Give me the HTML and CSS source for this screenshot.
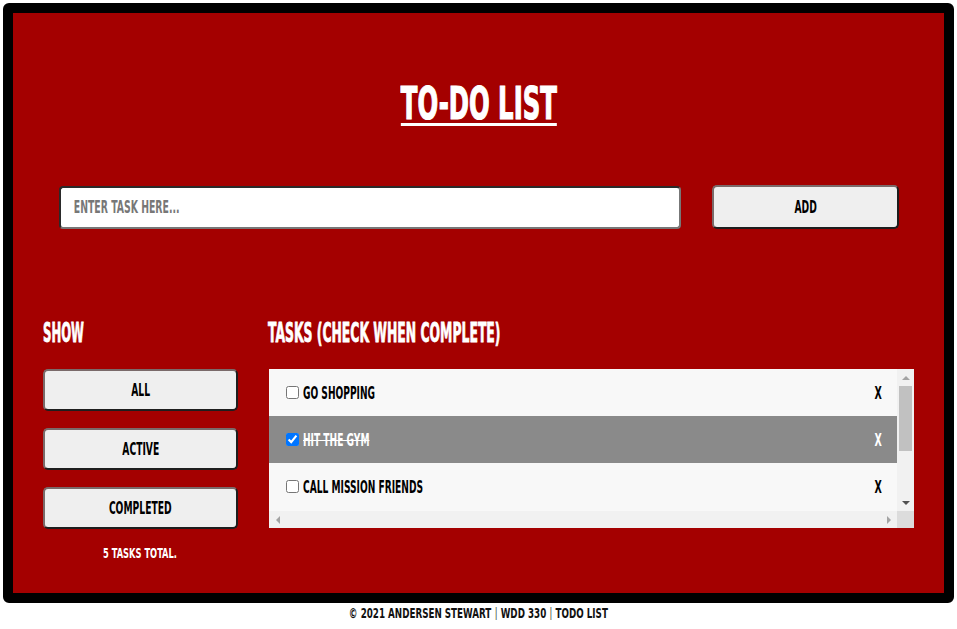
FILE: index.html
```html
<!DOCTYPE html>
<html lang="en">
<head>
<meta charset="utf-8">
<title>To-Do List</title>
<link rel="stylesheet" href="styles.css">
</head>
<body>
<div class="app">
  <h1 class="title"><span class="n">TO-DO LIST</span></h1>
  <form class="entry">
    <div class="fieldbox"><input class="field" type="text" placeholder="ENTER TASK HERE..."></div>
    <button class="btn add" type="button"><span class="n">ADD</span></button>
  </form>
  <div class="main">
    <aside class="side">
      <h2 class="head"><span class="n">SHOW</span></h2>
      <button class="btn filter" type="button"><span class="n">ALL</span></button>
      <button class="btn filter" type="button"><span class="n">ACTIVE</span></button>
      <button class="btn filter" type="button"><span class="n">COMPLETED</span></button>
      <p class="count"><span class="n">5 TASKS TOTAL.</span></p>
    </aside>
    <section class="tasks">
      <h2 class="head head-wide"><span class="n">TASKS (CHECK WHEN COMPLETE)</span></h2>
      <div class="listbox">
        <ul class="list">
          <li class="row"><input class="check" type="checkbox"><span class="label"><span class="n">GO SHOPPING</span></span><span class="del"><span class="n">X</span></span></li>
          <li class="row done"><input class="check" type="checkbox" checked><span class="label"><span class="n">HIT THE GYM</span></span><span class="del"><span class="n">X</span></span></li>
          <li class="row"><input class="check" type="checkbox"><span class="label"><span class="n">CALL MISSION FRIENDS</span></span><span class="del"><span class="n">X</span></span></li>
          <li class="row"><input class="check" type="checkbox"><span class="label"><span class="n">FINISH PROJECT</span></span><span class="del"><span class="n">X</span></span></li>
          <li class="row"><input class="check" type="checkbox"><span class="label"><span class="n">READ A BOOK</span></span><span class="del"><span class="n">X</span></span></li>
        </ul>
        <div class="vbar">
          <div class="sb-btn up"></div>
          <div class="thumb"></div>
          <div class="track"></div>
          <div class="sb-btn down"></div>
        </div>
        <div class="hbar">
          <div class="sb-btn left"></div>
          <div class="sb-btn right"></div>
        </div>
        <div class="corner"></div>
      </div>
    </section>
  </div>
</div>
<footer class="foot"><span class="n">© 2021 ANDERSEN STEWART <span class="sep">|</span> WDD 330 <span class="sep">|</span> TODO LIST</span></footer>
</body>
</html>
```
FILE: styles.css
```css
* { box-sizing: border-box; }

body {
  margin: 3px;
  background: #ffffff;
  font-family: "DejaVu Sans Condensed", "DejaVu Sans", sans-serif;
  font-weight: 700;
}

.n {
  display: inline-block;
  white-space: nowrap;
}

.app {
  height: 600px;
  border: 10px solid #000;
  border-radius: 6px;
  background: #a40000;
  padding-top: 69px;
}

.title {
  margin: 0;
  text-align: center;
  color: #fff;
  font-size: 44px;
  line-height: 44px;
}
.title .n {
  transform: scaleX(.615);
  text-decoration: underline;
  text-decoration-thickness: 3px;
  text-underline-offset: 4px;
  -webkit-text-stroke: 1.2px #fff;
}

.entry {
  display: flex;
  align-items: center;
  gap: 31px;
  margin: 59px 45px 0 46px;
}

.fieldbox {
  flex: 1;
  min-width: 0;
  height: 43px;
  overflow: hidden;
  border: 2px solid;
  border-color: #2a2a2a #777 #777 #2a2a2a;
  border-radius: 4px;
  background: #fff;
}

.field {
  display: block;
  width: calc(100% / .61);
  height: 100%;
  border: 0;
  padding: 0 0 0 21px;
  background: transparent;
  font-family: inherit;
  font-weight: 700;
  font-size: 17px;
  transform: scaleX(.61);
  transform-origin: left center;
  outline: none;
}
.field::placeholder { color: #777; }

.btn {
  display: block;
  height: 42px;
  padding: 0;
  background: #efefef;
  border: 2px solid;
  border-color: #7a6a6a #1e1e1e #1e1e1e #7a6a6a;
  border-radius: 5px;
  font-family: inherit;
  font-weight: 700;
  font-size: 17px;
  color: #000;
  text-align: center;
}
.btn .n { transform: scaleX(.6); }

.add {
  width: 187px;
  height: 44px;
}

.main {
  display: flex;
  gap: 30px;
  padding: 0 30px;
  margin-top: 90px;
}

.side {
  width: 195px;
  flex: none;
}

.head {
  margin: 0 0 23px;
  color: #fff;
  font-size: 27px;
  line-height: 27px;
}
.head .n {
  transform: scaleX(.48);
  transform-origin: left center;
  -webkit-text-stroke: .8px #fff;
}
.head-wide .n { transform: scaleX(.51); }

.filter {
  width: 195px;
  margin-bottom: 17px;
}

.count {
  margin: 3px 0 0;
  text-align: center;
  color: #fff;
  font-size: 14px;
  line-height: 14px;
}
.count .n { transform: scaleX(.66); }

.tasks {
  flex: 1;
  min-width: 0;
}

.listbox {
  display: grid;
  grid-template-columns: 1fr 17px;
  grid-template-rows: 142px 17px;
  margin-left: 1px;
}

.list {
  list-style: none;
  margin: 0;
  padding: 0;
  overflow: hidden;
  background: #f8f8f8;
}

.row {
  display: flex;
  align-items: center;
  height: 47px;
  padding: 0 15px 0 17px;
  background: #f8f8f8;
  color: #000;
  font-size: 17px;
}
.row.done {
  background: #8a8a8a;
  color: #fff;
}
.row.done .label .n { text-decoration: line-through; }

.check {
  margin: 0;
  width: 13px;
  height: 13px;
  flex: none;
}

.label {
  flex: 1;
  margin-left: 4px;
}
.label .n {
  transform: scaleX(.595);
  transform-origin: left center;
}

.del .n {
  transform: scaleX(.62);
  transform-origin: right center;
}

.vbar {
  display: flex;
  flex-direction: column;
  background: #f1f1f1;
}
.hbar {
  display: flex;
  justify-content: space-between;
  background: #f1f1f1;
}
.corner { background: #dcdcdc; }

.sb-btn {
  width: 17px;
  height: 17px;
  flex: none;
  display: flex;
  align-items: center;
  justify-content: center;
}
.sb-btn::before {
  content: "";
  width: 0;
  height: 0;
  border: 4px solid transparent;
}
.up::before { border-bottom-color: #a3a3a3; border-top-width: 0; }
.down::before { border-top-color: #505050; border-bottom-width: 0; }
.left::before { border-right-color: #a3a3a3; border-left-width: 0; }
.right::before { border-left-color: #a3a3a3; border-right-width: 0; }

.thumb {
  height: 65px;
  margin: 0 2px;
  background: #c1c1c1;
  flex: none;
}
.track { flex: 1; }

.foot {
  margin-top: 3px;
  text-align: center;
  color: #111;
  font-size: 14px;
  line-height: 14px;
}
.foot .n { transform: scaleX(.695); }
.sep {
  font-family: "DejaVu Sans", sans-serif;
  font-weight: 400;
  color: #4f5f4f;
}
```
